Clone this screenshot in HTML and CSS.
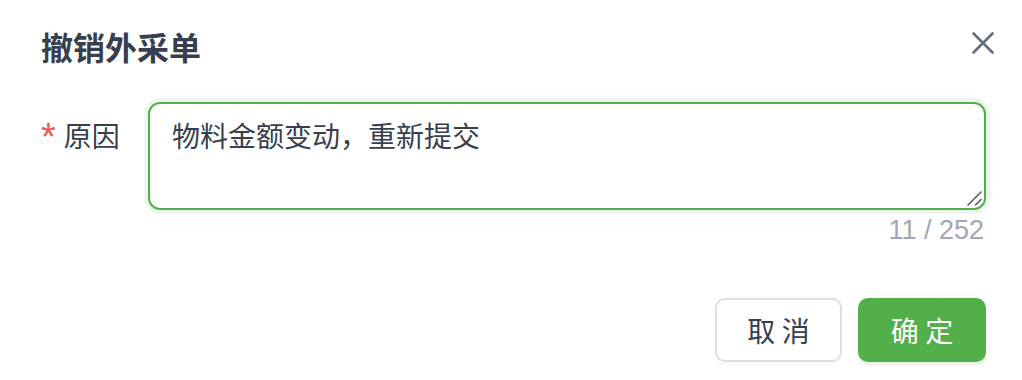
FILE: index.html
```html
<!DOCTYPE html>
<html lang="zh-CN">
<head>
<meta charset="utf-8">
<title>撤销外采单</title>
<link rel="stylesheet" href="styles.css">
</head>
<body>
<div class="dialog">
  <div class="dialog-header">
    <div class="dialog-title">撤销外采单</div>
    <button class="dialog-close" aria-label="关闭">
      <svg width="22" height="22" viewBox="0 0 22 22"><path d="M1.5 1.5 L20.5 20.5 M20.5 1.5 L1.5 20.5" stroke="#656c7b" stroke-width="2.6" stroke-linecap="round" fill="none"/></svg>
    </button>
  </div>
  <div class="dialog-body">
    <div class="form-row">
      <label class="form-label"><span class="required">*</span>原因</label>
      <div class="form-control">
        <div class="textarea-wrap">
          <textarea class="textarea" rows="2">物料金额变动，重新提交</textarea>
          <svg class="resizer" width="16" height="16" viewBox="0 0 16 16"><path d="M15 2 L2 15 M15 9.5 L9.5 15" stroke="#5a5d63" stroke-width="1.6" stroke-linecap="round" fill="none"/></svg>
        </div>
        <div class="counter">11 / 252</div>
      </div>
    </div>
  </div>
  <div class="dialog-footer">
    <button class="btn btn-default">取 消</button>
    <button class="btn btn-primary">确 定</button>
  </div>
</div>
</body>
</html>
```
FILE: styles.css
```css
html, body {
  margin: 0;
  padding: 0;
  background: #ffffff;
}
body {
  font-family: "Liberation Sans", "Noto Sans CJK SC", sans-serif;
  color: #363e4f;
}
.dialog {
  width: 1022px;
  height: 380px;
  box-sizing: border-box;
}
.dialog-header {
  display: flex;
  justify-content: space-between;
  align-items: flex-start;
  padding: 24px 28px 0 41px;
}
.dialog-title {
  font-family: "Noto Sans CJK SC", sans-serif;
  font-size: 32px;
  font-weight: 700;
  line-height: 44px;
  color: #363e4f;
}
.dialog-close {
  margin-top: 8px;
  width: 22px;
  height: 22px;
  padding: 0;
  border: 0;
  background: transparent;
  display: flex;
}
.dialog-body {
  padding: 34px 36px 0 41px;
}
.form-row {
  display: flex;
}
.form-label {
  width: 107px;
  box-sizing: border-box;
  padding: 12px 30px 0 0;
  text-align: right;
  font-family: "Noto Sans CJK SC", sans-serif;
  font-size: 28px;
  line-height: 42px;
  color: #363e4f;
  white-space: nowrap;
}
.required {
  display: inline-block;
  vertical-align: top;
  margin: 4px 8px 0 0;
  color: #ee5552;
  font-family: "Liberation Sans", sans-serif;
  font-size: 38px;
  line-height: 38px;
}
.form-control {
  flex: 1;
  display: flex;
  flex-direction: column;
}
.textarea-wrap {
  position: relative;
}
.textarea {
  display: block;
  width: 100%;
  height: 108px;
  box-sizing: border-box;
  margin: 0;
  padding: 10px 22px;
  border: 2px solid #52af4a;
  border-radius: 12px;
  box-shadow: 0 0 0 4px rgba(82, 175, 74, 0.1);
  outline: none;
  font-family: "Noto Sans CJK SC", sans-serif;
  font-size: 28px;
  line-height: 42px;
  color: #363e4f;
  resize: none;
}
.resizer {
  position: absolute;
  right: 4px;
  bottom: 4px;
  pointer-events: none;
}
.counter {
  margin-top: 2px;
  text-align: right;
  padding-right: 2px;
  font-family: "Liberation Sans", sans-serif;
  font-size: 27px;
  line-height: 36px;
  color: #9fa6b6;
}
.dialog-footer {
  display: flex;
  justify-content: flex-end;
  gap: 16px;
  padding: 50px 36px 0 0;
}
.btn {
  height: 64px;
  box-sizing: border-box;
  border-radius: 10px;
  font-family: "Noto Sans CJK SC", sans-serif;
  font-size: 28px;
  line-height: 1;
  display: flex;
  align-items: center;
  justify-content: center;
  padding: 0;
  cursor: pointer;
}
.btn-default {
  width: 127px;
  background: #ffffff;
  border: 2px solid #dcdfe6;
  color: #363e4f;
  box-shadow: 0 4px 0 rgba(0, 0, 0, 0.02);
}
.btn-primary {
  width: 128px;
  background: #52af4a;
  border: 2px solid #52af4a;
  color: #ffffff;
  box-shadow: 0 4px 0 rgba(82, 175, 74, 0.1);
}
```
